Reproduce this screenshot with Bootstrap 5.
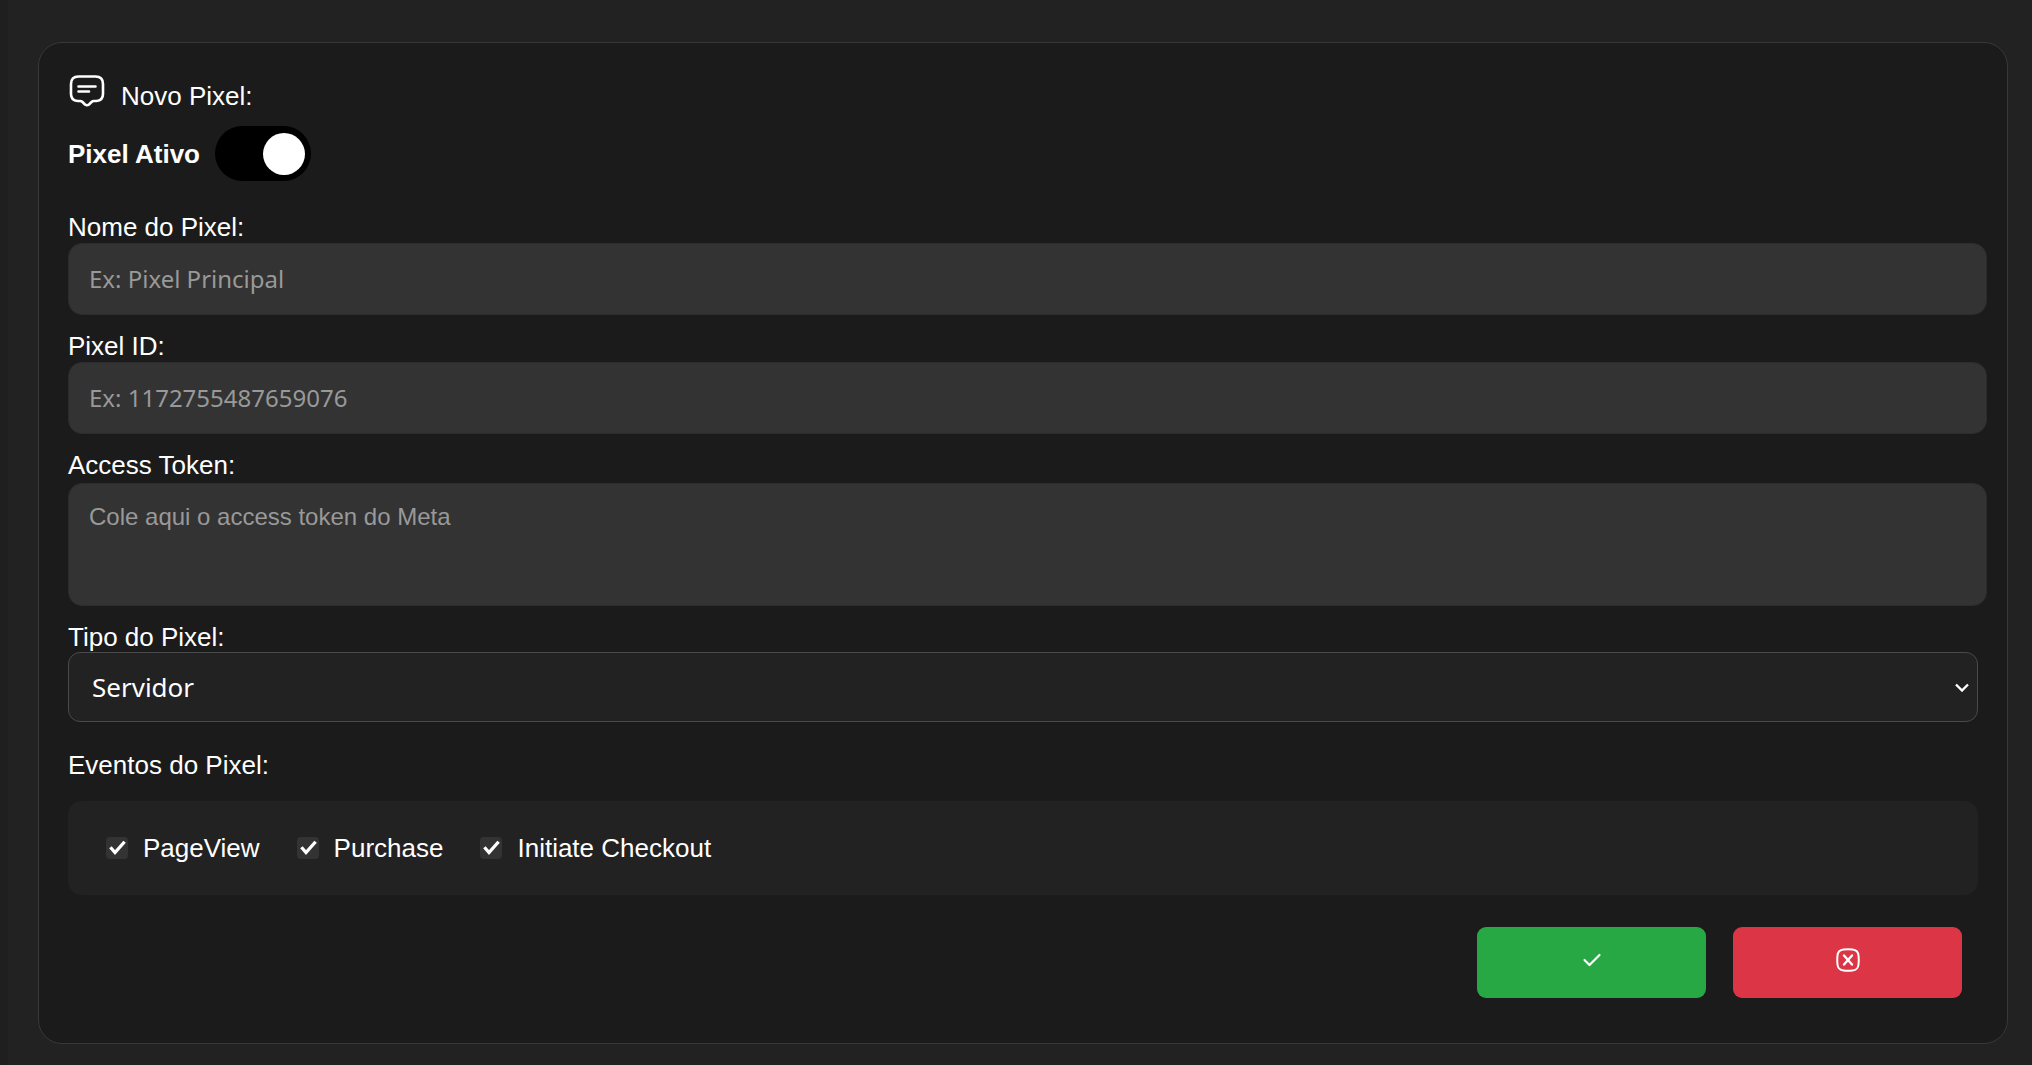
<!DOCTYPE html>
<html lang="pt-BR" data-bs-theme="dark">
<head>
<meta charset="utf-8">
<meta name="viewport" content="width=device-width, initial-scale=1">
<title>Novo Pixel</title>
<link href="https://cdn.jsdelivr.net/npm/bootstrap@5.3.0/dist/css/bootstrap.min.css" rel="stylesheet">
<style>
  body { background: #222; color: #fff; font-family: "Liberation Sans", Arial, sans-serif; font-size: 26px; line-height: 30px; border-left: 8px solid #1f1f1f; }
  .page-wrap { padding: 42px 24px 21px 30px; }
  .pixel-card { background: #1b1b1b; border: 1px solid #383838; border-radius: 24px; padding: 32px 29px 45px; }
  .card-heading { height: 36px; gap: 13px; margin-bottom: 15px; }
  .card-heading h1 { font-size: 26px; line-height: 30px; font-weight: 400; }
  .switch-row { gap: 15px; margin-bottom: 31px; }
  .switch-row label { font-weight: 700; }
  .form-switch .form-check-input.pixel-switch { width: 96px; height: 55px; border: 0; border-radius: 28px; background-color: #000; background-size: 42px 42px; background-position: right 6px center; background-repeat: no-repeat; background-image: url("data:image/svg+xml,%3csvg xmlns='http://www.w3.org/2000/svg' viewBox='0 0 42 42'%3e%3ccircle cx='21' cy='21' r='21' fill='%23fff'/%3e%3c/svg%3e"); }
  .field-group { margin-bottom: 16px; }
  .field-group label { display: block; margin-bottom: 1px; }
  .field-token label { margin-bottom: 3px; }
  .form-control.pixel-field { width: calc(100% + 9px); height: 72px; padding: 0 20px 2px; font: 24px/30px "Noto Sans", sans-serif; color: #fff; background: #333; border: 1px solid #2c2c2c; border-radius: 14px; }
  .form-control.pixel-field::placeholder { color: #999; opacity: 1; }
  .form-control.pixel-token { height: 123px; padding-top: 18px; font-family: "Liberation Sans", Arial, sans-serif; resize: none; }
  .field-type label { margin-bottom: 0; }
  .form-select.pixel-select { height: 70px; padding: 0 40px 0 23px; font: 26px/36px "Noto Sans", sans-serif; color: #fff; background-color: #222; border: 1px solid #4a4a4a; border-radius: 12px; background-size: 14px 9px; background-position: right 8px center; background-image: url("data:image/svg+xml,%3csvg xmlns='http://www.w3.org/2000/svg' viewBox='0 0 14 9'%3e%3cpath d='M1 1.5l6 6 6-6' fill='none' stroke='%23fff' stroke-width='2.4'/%3e%3c/svg%3e"); }
  .field-type { margin-bottom: 28px; }
  .events legend { font-size: 26px; line-height: 30px; margin-bottom: 21px; }
  .events-box { background: #222; border-radius: 14px; min-height: 94px; padding: 0 38px; gap: 10px 37px; }
  .event-item { gap: 15px; }
  .form-check-input.event-check { width: 22px; height: 22px; border: 0; border-radius: 4px; background-color: #333; background-size: 22px 22px; background-image: url("data:image/svg+xml,%3csvg xmlns='http://www.w3.org/2000/svg' viewBox='0 0 22 22'%3e%3cpath d='M5.5 11.5l3.500 4L17.500 6' fill='none' stroke='%23fff' stroke-width='3.3' stroke-linecap='square'/%3e%3c/svg%3e"); }
  .form-actions { gap: 27px; margin-top: 32px; padding-right: 16px; }
  .btn.action-btn { width: 229px; height: 71px; border: 0; border-radius: 9px; padding: 0 0 6px; }
  .action-save, .action-save:hover { background: #28a745; }
  .action-cancel, .action-cancel:hover { background: #dc3545; }
  .action-btn svg { display: block; margin: 0 auto; }
</style>
<script src="https://cdn.jsdelivr.net/npm/bootstrap@5.3.0/dist/js/bootstrap.bundle.min.js"></script>
</head>
<body>
<main class="page-wrap">
  <form class="pixel-card">
    <div class="card-heading d-flex align-items-end">
      <svg class="align-self-start" width="40" height="34" viewBox="0 0 40 34" fill="none" stroke="#fff" stroke-width="2.6" stroke-linecap="round" stroke-linejoin="round" aria-hidden="true">
        <path d="M10.500 1.500h17q7.500 0 7.500 7.500v10q0 6.500-6.500 7h-2.500q-1.500 0-2.500 1l-2.500 2.500q-2 1.500-4 0L14.500 27q-1-1-2.500-1H9.500q-6.500-.5-6.500-7V9q0-7.500 7.500-7.500z"/>
        <path d="M10.500 11.500h17M10.500 16.500h10.500"/>
      </svg>
      <h1 class="mb-0">Novo Pixel:</h1>
    </div>

    <div class="switch-row d-flex align-items-center">
      <label for="pixelAtivo">Pixel Ativo</label>
      <div class="form-switch d-flex p-0">
        <input class="form-check-input pixel-switch m-0" type="checkbox" role="switch" id="pixelAtivo" checked>
      </div>
    </div>

    <div class="field-group">
      <label for="nomePixel">Nome do Pixel:</label>
      <input type="text" class="form-control pixel-field" id="nomePixel" placeholder="Ex: Pixel Principal">
    </div>
    <div class="field-group">
      <label for="pixelId">Pixel ID:</label>
      <input type="text" class="form-control pixel-field" id="pixelId" placeholder="Ex: 1172755487659076">
    </div>
    <div class="field-group field-token">
      <label for="accessToken">Access Token:</label>
      <textarea class="form-control pixel-field pixel-token" id="accessToken" placeholder="Cole aqui o access token do Meta"></textarea>
    </div>
    <div class="field-group field-type">
      <label for="tipoPixel">Tipo do Pixel:</label>
      <select class="form-select pixel-select" id="tipoPixel">
        <option selected>Servidor</option>
      </select>
    </div>

    <fieldset class="events">
      <legend>Eventos do Pixel:</legend>
      <div class="events-box d-flex flex-wrap align-items-center">
        <div class="event-item d-flex align-items-center">
          <input class="form-check-input event-check m-0" type="checkbox" id="evPageView" checked>
          <label for="evPageView">PageView</label>
        </div>
        <div class="event-item d-flex align-items-center">
          <input class="form-check-input event-check m-0" type="checkbox" id="evPurchase" checked>
          <label for="evPurchase">Purchase</label>
        </div>
        <div class="event-item d-flex align-items-center">
          <input class="form-check-input event-check m-0" type="checkbox" id="evCheckout" checked>
          <label for="evCheckout">Initiate Checkout</label>
        </div>
      </div>
    </fieldset>

    <div class="form-actions d-flex justify-content-end">
      <button type="submit" class="btn action-btn action-save d-block" aria-label="Salvar">
        <svg width="24" height="24" viewBox="0 0 24 24" fill="none" stroke="#fff" stroke-width="2.2" stroke-linecap="round" stroke-linejoin="round"><path d="M4.500 12l5 5L19.500 7"/></svg>
      </button>
      <button type="button" class="btn action-btn action-cancel d-block" aria-label="Cancelar">
        <svg width="24" height="24" viewBox="0 0 24 24" fill="none" stroke="#fff" stroke-width="2" stroke-linecap="round" stroke-linejoin="round"><path d="M7.500 1.500Q12 1 16.500 1.500q5.500.5 6 6 .5 4.500 0 9-.5 5.500-6 6-4.500.5-9 0-5.500-.5-6-6-.5-4.500 0-9 .5-5.500 6-6z"/><path d="M8 7.500l8 9M16 7.500l-8 9" stroke-width="2.4"/></svg>
      </button>
    </div>
  </form>
</main>
</body>
</html>
